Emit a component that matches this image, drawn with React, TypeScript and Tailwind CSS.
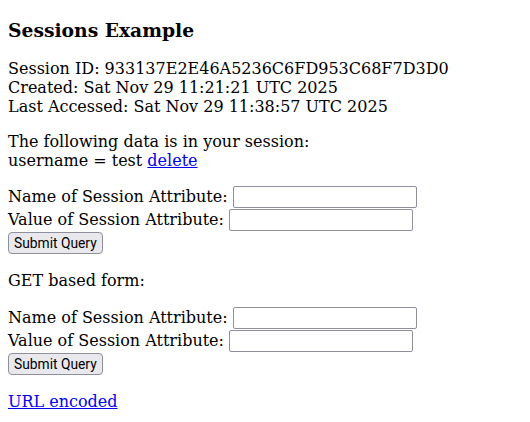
export default function App() {
  const field = "h-[22px] w-[184px] rounded-[2px] border border-[#8f8f9d] bg-white"
  const button =
    "h-[22px] rounded-[4px] border border-[#8f8f9d] bg-[#e9e9ed] px-[5px] text-[13.8px] leading-[20px] text-black [font-family:Roboto,sans-serif]"

  const SessionForm = () => (
    <div className="flex flex-col">
      <div className="flex h-[23px] items-start">
        <span className="whitespace-pre leading-[22px]">Name of Session Attribute: </span>
        <input type="text" className={field} />
      </div>
      <div className="flex h-[23px] items-start">
        <span className="whitespace-pre leading-[22px]">Value of Session Attribute: </span>
        <input type="text" className={field} />
      </div>
      <div className="flex h-[23px] items-start">
        <button type="button" className={button}>
          Submit Query
        </button>
      </div>
    </div>
  )

  return (
    <div className="min-h-[422px] bg-white px-2 pt-[18.72px] text-[16px] leading-[normal] text-black [font-family:'DejaVu_Serif',serif]">
      <h3 className="text-[18.72px] font-bold leading-[normal]">Sessions Example</h3>

      <div className="mt-[18.72px]">
        Session ID: 933137E2E46A5236C6FD953C68F7D3D0
        <br />
        Created: Sat Nov 29 11:21:21 UTC 2025
        <br />
        Last Accessed: Sat Nov 29 11:38:57 UTC 2025
      </div>

      <p className="mt-4">
        The following data is in your session:
        <br />
        username = test{" "}
        <a href="#" className="text-[#0000ee] underline">
          delete
        </a>
      </p>

      <div className="mt-[15.7px]">
        <SessionForm />
      </div>

      <p className="mt-[16px]">GET based form:</p>

      <div className="mt-[16.4px]">
        <SessionForm />
      </div>

      <p className="mt-4">
        <a href="#" className="text-[#0000ee] underline">
          URL encoded
        </a>
      </p>
    </div>
  )
}
